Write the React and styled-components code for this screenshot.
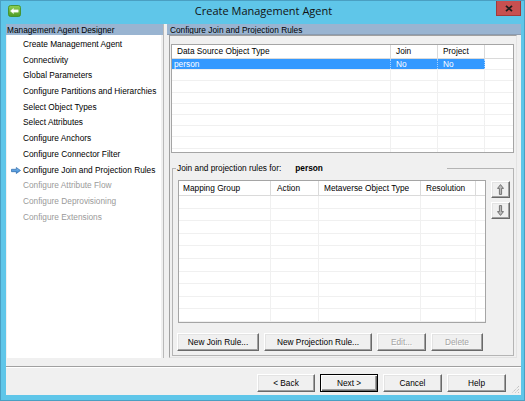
import React from "react";
import styled, { createGlobalStyle } from "styled-components";

const UI = `"Liberation Sans", Arial, sans-serif`;

const Global = createGlobalStyle`
  html, body { margin: 0; padding: 0; overflow: hidden; background: #fff; }
  *, *::before, *::after { box-sizing: border-box; }
`;

const Window = styled.div`
  width: 525px;
  height: 401px;
  background: #5fc6e9;
  border: 1px solid #4a9fc2;
  padding: 0 3px 5px 5px;
  display: flex;
  flex-direction: column;
  font-family: ${UI};
  font-size: 8.3px;
  color: #000;
`;

const TitleBar = styled.div`
  height: 23px;
  flex: none;
  display: grid;
  grid-template-columns: 1fr auto 1fr;
  align-items: start;
`;

const AppIcon = styled.svg`
  margin: 4px 0 0 2px;
  display: block;
`;

const Title = styled.div`
  font-family: "Open Sans", "Noto Sans", sans-serif;
  font-size: 11px;
  line-height: 15px;
  margin-top: 2px;
  color: #111;
  white-space: nowrap;
`;

const CloseButton = styled.div`
  justify-self: end;
  width: 25px;
  height: 15px;
  background: #c75050;
  border: 1px solid #a23a3a;
  border-top: none;
  display: flex;
  align-items: center;
  justify-content: center;
`;

const Client = styled.div`
  flex: 1;
  background: #f0f0f0;
  display: flex;
  flex-direction: column;
  position: relative;
`;

const MainArea = styled.div`
  height: 334px;
  flex: none;
  display: flex;
`;

const LeftPanel = styled.div`
  width: 157px;
  flex: none;
  display: flex;
  flex-direction: column;
`;

const RightPanel = styled.div`
  flex: 1;
  display: flex;
  flex-direction: column;
  min-width: 0;
`;

const PanelHeader = styled.div`
  height: 11px;
  flex: none;
  line-height: 12px;
  background: #99b4d1;
  padding-left: ${(p) => p.$pad}px;
  white-space: nowrap;
  overflow: hidden;
  border-bottom: ${(p) => (p.$shadow ? "1px solid #8a9bb0" : "none")};
`;

const Splitter = styled.div`
  width: 4px;
  flex: none;
  border-left: 1px solid #b9b9b9;
`;

const TreeList = styled.div`
  flex: 1;
  background: #fff;
  margin: 0 2px 0 1px;
  padding-top: 2px;
`;

const TreeItem = styled.div`
  display: flex;
  align-items: center;
  height: 15.7px;
  line-height: 15.7px;
  white-space: nowrap;
  color: ${(p) => (p.$disabled ? "#9a9a9a" : "#000")};
`;

const ItemIcon = styled.div`
  width: 16px;
  flex: none;
  padding-left: 4px;
  display: flex;
  align-items: center;
`;

const Frame = styled.div`
  flex: 1;
  margin: 0 4px 0 2px;
  border: 1px solid;
  border-color: #a0a0a0 #e3e3e3 #e3e3e3 #a0a0a0;
  padding-top: 8px;
  display: flex;
  flex-direction: column;
`;

const ListBox = styled.div`
  width: ${(p) => (p.$width ? `${p.$width}px` : "auto")};
  height: ${(p) => p.$height}px;
  margin: ${(p) => p.$margin || "0"};
  flex: none;
  background: #fff;
  border: 1px solid #a5a5a5;
  overflow: hidden;
  display: flex;
  flex-direction: column;
`;

const HeaderRow = styled.div`
  display: flex;
  height: ${(p) => p.$height}px;
  flex: none;
  border-bottom: 1px solid #dadada;
`;

const HeaderCell = styled.div`
  width: ${(p) => (p.$w ? `${p.$w}px` : "auto")};
  flex: ${(p) => (p.$w ? "none" : "1")};
  padding-left: ${(p) => p.$pad}px;
  border-right: ${(p) => (p.$w ? "1px solid #dadada" : "none")};
  line-height: ${(p) => p.$lh}px;
  white-space: nowrap;
  overflow: hidden;
`;

const BodyRow = styled.div`
  display: flex;
  height: ${(p) => p.$height}px;
  flex: none;
  border-bottom: 1px solid #f0f0f0;
`;

const BodyCell = styled.div`
  width: ${(p) => (p.$w ? `${p.$w}px` : "auto")};
  flex: ${(p) => (p.$w ? "none" : "1")};
  padding-left: ${(p) => p.$pad}px;
  border-right: ${(p) =>
    p.$w ? (p.$sel ? "1px dotted #a8d2ff" : "1px solid #f0f0f0") : "none"};
  background: ${(p) => (p.$sel ? "#3399ff" : "transparent")};
  color: ${(p) => (p.$sel ? "#fff" : "#000")};
  line-height: ${(p) => p.$lh}px;
  white-space: nowrap;
  overflow: hidden;
`;

const GroupBox = styled.fieldset`
  margin: 10px 2px 0 2px;
  padding: 6px 3px 4px 5px;
  border: 1px solid #b4b4b4;
  min-width: 0;
`;

const Legend = styled.legend`
  margin-left: -2px;
  padding: 0 0 0 1px;
  width: 271px;
  line-height: 11px;
  font-size: 8.3px;
  white-space: nowrap;
`;

const LegendValue = styled.span`
  font-weight: bold;
  margin-left: 14px;
`;

const GroupBody = styled.div`
  display: flex;
  gap: 5px;
`;

const MoveButtons = styled.div`
  width: 19px;
  flex: none;
  padding-top: 1px;
  display: flex;
  flex-direction: column;
  gap: 4px;
`;

const Button = styled.div`
  width: ${(p) => p.$w}px;
  height: ${(p) => p.$h || 18}px;
  flex: none;
  display: flex;
  align-items: center;
  justify-content: center;
  background: #f0f0f0;
  border: 1px solid;
  border-color: ${(p) => (p.$default ? "#000" : "#fff #696969 #696969 #fff")};
  box-shadow: ${(p) =>
    p.$default
      ? "inset 1px 1px 0 #fff, inset -1px -1px 0 #696969, inset -2px -2px 0 #a0a0a0"
      : "inset -1px -1px 0 #a0a0a0, inset 1px 1px 0 #e3e3e3"};
  color: ${(p) => (p.$disabled ? "#a3a3a3" : "#000")};
  text-shadow: ${(p) => (p.$disabled ? "1px 1px 0 #fff" : "none")};
  white-space: nowrap;
  line-height: 12px;
`;

const ButtonRow = styled.div`
  display: flex;
  gap: 5px;
  margin: 10px 0 0 -1px;
`;

const Separator = styled.div`
  height: 2px;
  flex: none;
  margin-top: 8px;
  border-top: 1px solid #a0a0a0;
  border-bottom: 1px solid #fff;
`;

const ButtonBar = styled.div`
  display: flex;
  justify-content: flex-end;
  gap: 5px;
  margin-top: 6px;
  padding-right: 15px;
`;

const Grip = styled.svg`
  position: absolute;
  right: 1px;
  bottom: 1px;
`;

const steps = [
  { label: "Create Management Agent" },
  { label: "Connectivity" },
  { label: "Global Parameters" },
  { label: "Configure Partitions and Hierarchies" },
  { label: "Select Object Types" },
  { label: "Select Attributes" },
  { label: "Configure Anchors" },
  { label: "Configure Connector Filter" },
  { label: "Configure Join and Projection Rules", current: true },
  { label: "Configure Attribute Flow", disabled: true },
  { label: "Configure Deprovisioning", disabled: true },
  { label: "Configure Extensions", disabled: true },
];

const upperColumns = [
  { label: "Data Source Object Type", w: 219, pad: 5, bodyPad: 2 },
  { label: "Join", w: 47, pad: 5, bodyPad: 5 },
  { label: "Project", w: 47, pad: 5, bodyPad: 5 },
];

const lowerColumns = [
  { label: "Mapping Group", w: 92, pad: 4, bodyPad: 4 },
  { label: "Action", w: 48, pad: 6, bodyPad: 5 },
  { label: "Metaverse Object Type", w: 102, pad: 5, bodyPad: 5 },
  { label: "Resolution", w: 55, pad: 5, bodyPad: 5 },
];

function ListView({ columns, rows, rowCount, rowHeight, headerHeight, width, height, margin }) {
  const allRows = Array.from({ length: rowCount }, (_, i) => rows[i] || null);
  return (
    <ListBox $width={width} $height={height} $margin={margin}>
      <HeaderRow $height={headerHeight}>
        {columns.map((c) => (
          <HeaderCell key={c.label} $w={c.w} $pad={c.pad} $lh={headerHeight - 1}>
            {c.label}
          </HeaderCell>
        ))}
        <HeaderCell $pad={0} $lh={headerHeight - 1} />
      </HeaderRow>
      {allRows.map((r, i) => (
        <BodyRow key={i} $height={rowHeight}>
          {columns.map((c, j) => (
            <BodyCell
              key={c.label}
              $w={c.w}
              $pad={c.bodyPad}
              $sel={r && r.selected}
              $lh={rowHeight - 1}
            >
              {r ? r.cells[j] : ""}
            </BodyCell>
          ))}
          <BodyCell $pad={0} $lh={rowHeight - 1} />
        </BodyRow>
      ))}
    </ListBox>
  );
}

const CurrentArrow = () => (
  <svg width="10" height="7" viewBox="0 0 10 7">
    <defs>
      <linearGradient id="arr" x1="0" y1="0" x2="0" y2="1">
        <stop offset="0" stopColor="#8cc4f2" />
        <stop offset="1" stopColor="#2f7fd0" />
      </linearGradient>
    </defs>
    <path d="M0.5 2.3 H5.3 V0.5 L9.5 3.5 L5.3 6.5 V4.7 H0.5 Z" fill="url(#arr)" stroke="#2a68aa" strokeWidth="0.7" />
  </svg>
);

const MoveArrow = ({ down }) => (
  <svg width="7" height="11" viewBox="0 0 7 11" style={down ? { transform: "rotate(180deg)" } : undefined}>
    <path d="M3.5 0.6 L6.5 4.4 H4.6 V10.4 H2.4 V4.4 H0.5 Z" fill="#b9b9b9" stroke="#6a6a6a" strokeWidth="0.9" strokeLinejoin="round" />
  </svg>
);

export default function App() {
  return (
    <>
      <Global />
      <Window>
        <TitleBar>
          <AppIcon width="13" height="12" viewBox="0 0 13 12">
            <defs>
              <linearGradient id="ico" x1="0" y1="0" x2="0" y2="1">
                <stop offset="0" stopColor="#8fd055" />
                <stop offset="1" stopColor="#4d9a24" />
              </linearGradient>
            </defs>
            <rect x="0.5" y="0.5" width="12" height="11" rx="2" fill="url(#ico)" stroke="#3f8a1c" strokeWidth="0.8" />
            <path d="M2.3 6 L5.6 3.2 V4.8 H10.3 V7.2 H5.6 V8.8 Z" fill="#fff" stroke="#dfeecf" strokeWidth="0.4" />
          </AppIcon>
          <Title>Create Management Agent</Title>
          <CloseButton>
            <svg width="8" height="7" viewBox="0 0 8 7">
              <path d="M1 0.8 L7 6.2 M7 0.8 L1 6.2" stroke="#1e1e1e" strokeWidth="1.8" />
            </svg>
          </CloseButton>
        </TitleBar>
        <Client>
          <MainArea>
            <LeftPanel>
              <PanelHeader $pad={1}>Management Agent Designer</PanelHeader>
              <TreeList>
                {steps.map((s) => (
                  <TreeItem key={s.label} $disabled={s.disabled}>
                    <ItemIcon>{s.current && <CurrentArrow />}</ItemIcon>
                    {s.label}
                  </TreeItem>
                ))}
              </TreeList>
            </LeftPanel>
            <Splitter />
            <RightPanel>
              <PanelHeader $pad={3} $shadow>
                Configure Join and Projection Rules
              </PanelHeader>
              <Frame>
                <ListView
                  columns={upperColumns}
                  rows={[{ selected: true, cells: ["person", "No", "No"] }]}
                  rowCount={9}
                  rowHeight={11.2}
                  headerHeight={14}
                  height={109}
                  margin="0 2px 0 1px"
                />
                <GroupBox>
                  <Legend>
                    Join and projection rules for:
                    <LegendValue>person</LegendValue>
                  </Legend>
                  <GroupBody>
                    <ListView
                      columns={lowerColumns}
                      rows={[]}
                      rowCount={11}
                      rowHeight={12.6}
                      headerHeight={15}
                      width={308}
                      height={143}
                    />
                    <MoveButtons>
                      <Button $w={19} $h={17}>
                        <MoveArrow />
                      </Button>
                      <Button $w={19} $h={17}>
                        <MoveArrow down />
                      </Button>
                    </MoveButtons>
                  </GroupBody>
                  <ButtonRow>
                    <Button $w={82}>New Join Rule...</Button>
                    <Button $w={108}>New Projection Rule...</Button>
                    <Button $w={49} $disabled>
                      Edit...
                    </Button>
                    <Button $w={52} $disabled>
                      Delete
                    </Button>
                  </ButtonRow>
                </GroupBox>
              </Frame>
            </RightPanel>
          </MainArea>
          <Separator />
          <ButtonBar>
            <Button $w={58}>{"< Back"}</Button>
            <Button $w={58} $default>
              {"Next >"}
            </Button>
            <Button $w={59}>Cancel</Button>
            <Button $w={59}>Help</Button>
          </ButtonBar>
          <Grip width="10" height="10" viewBox="0 0 10 10">
            <path d="M9 2 L2 9 M9 5 L5 9 M9 8 L8 9" stroke="#b0b0b0" strokeWidth="1" strokeDasharray="1 1" />
          </Grip>
        </Client>
      </Window>
    </>
  );
}
